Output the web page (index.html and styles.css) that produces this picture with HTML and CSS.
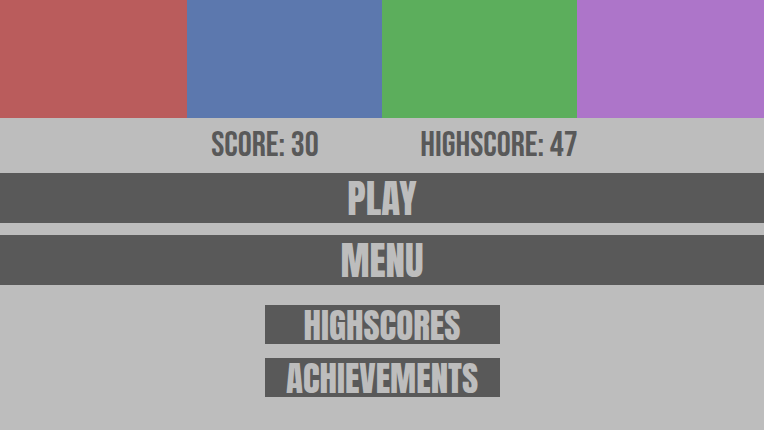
FILE: index.html
```html
<!DOCTYPE html>
<html lang="en">
<head>
  <meta charset="UTF-8" />
  <meta name="viewport" content="width=device-width, initial-scale=1.0"/>
  <title>Game Over</title>
  <link rel="stylesheet" href="styles.css">
</head>
<body>
  <div class="colors">
    <div class="color red"></div>
    <div class="color blue wide"></div>
    <div class="color green wide"></div>
    <div class="color purple"></div>
  </div>

  <div class="scores">
    <div class="score">SCORE: 30</div>
    <div class="score">HIGHSCORE: 47</div>
  </div>

  <main class="buttons">
    <button class="btn-large">PLAY</button>
    <button class="btn-large">MENU</button>
  </main>

  <div class="small-buttons">
    <button class="btn-small">HIGHSCORES</button>
    <button class="btn-small">ACHIEVEMENTS</button>
  </div>
</body>
</html>
```

FILE: styles.css
```css
body {
  margin: 0;
  font-family: 'Bebas Neue', 'Liberation Sans', sans-serif;
  background-color: #bdbdbd;
  color: #595959;
}

.colors {
  display: flex;
  height: 118px;
}

.color {
  flex: 187;
}

.wide {
  flex: 195;
}

.red {
  background-color: #ba5c5c;
}

.blue {
  background-color: #5c78ae;
}

.green {
  background-color: #5cae5c;
}

.purple {
  background-color: #ad75c9;
}

.scores {
  display: flex;
  justify-content: center;
}

.score {
  width: 234px;
  text-align: center;
  font-size: 35px;
  line-height: 55px;
  white-space: nowrap;
}

.buttons {
  display: flex;
  flex-direction: column;
  gap: 12px;
}

button {
  padding: 2px 0 0;
  border: none;
  background-color: #595959;
  color: #bdbdbd;
  font-family: Anton, Impact, 'Bebas Neue', 'Liberation Sans', sans-serif;
  cursor: pointer;
}

button:hover {
  background-color: #4d4d4d;
}

.btn-large {
  width: 100%;
  height: 50px;
  font-size: 39px;
  line-height: 48px;
}

.small-buttons {
  display: flex;
  flex-direction: column;
  align-items: center;
  gap: 14px;
  padding: 20px 0 32px;
}

.btn-small {
  width: 235px;
  height: 39px;
  font-size: 35px;
  line-height: 37px;
}
```
